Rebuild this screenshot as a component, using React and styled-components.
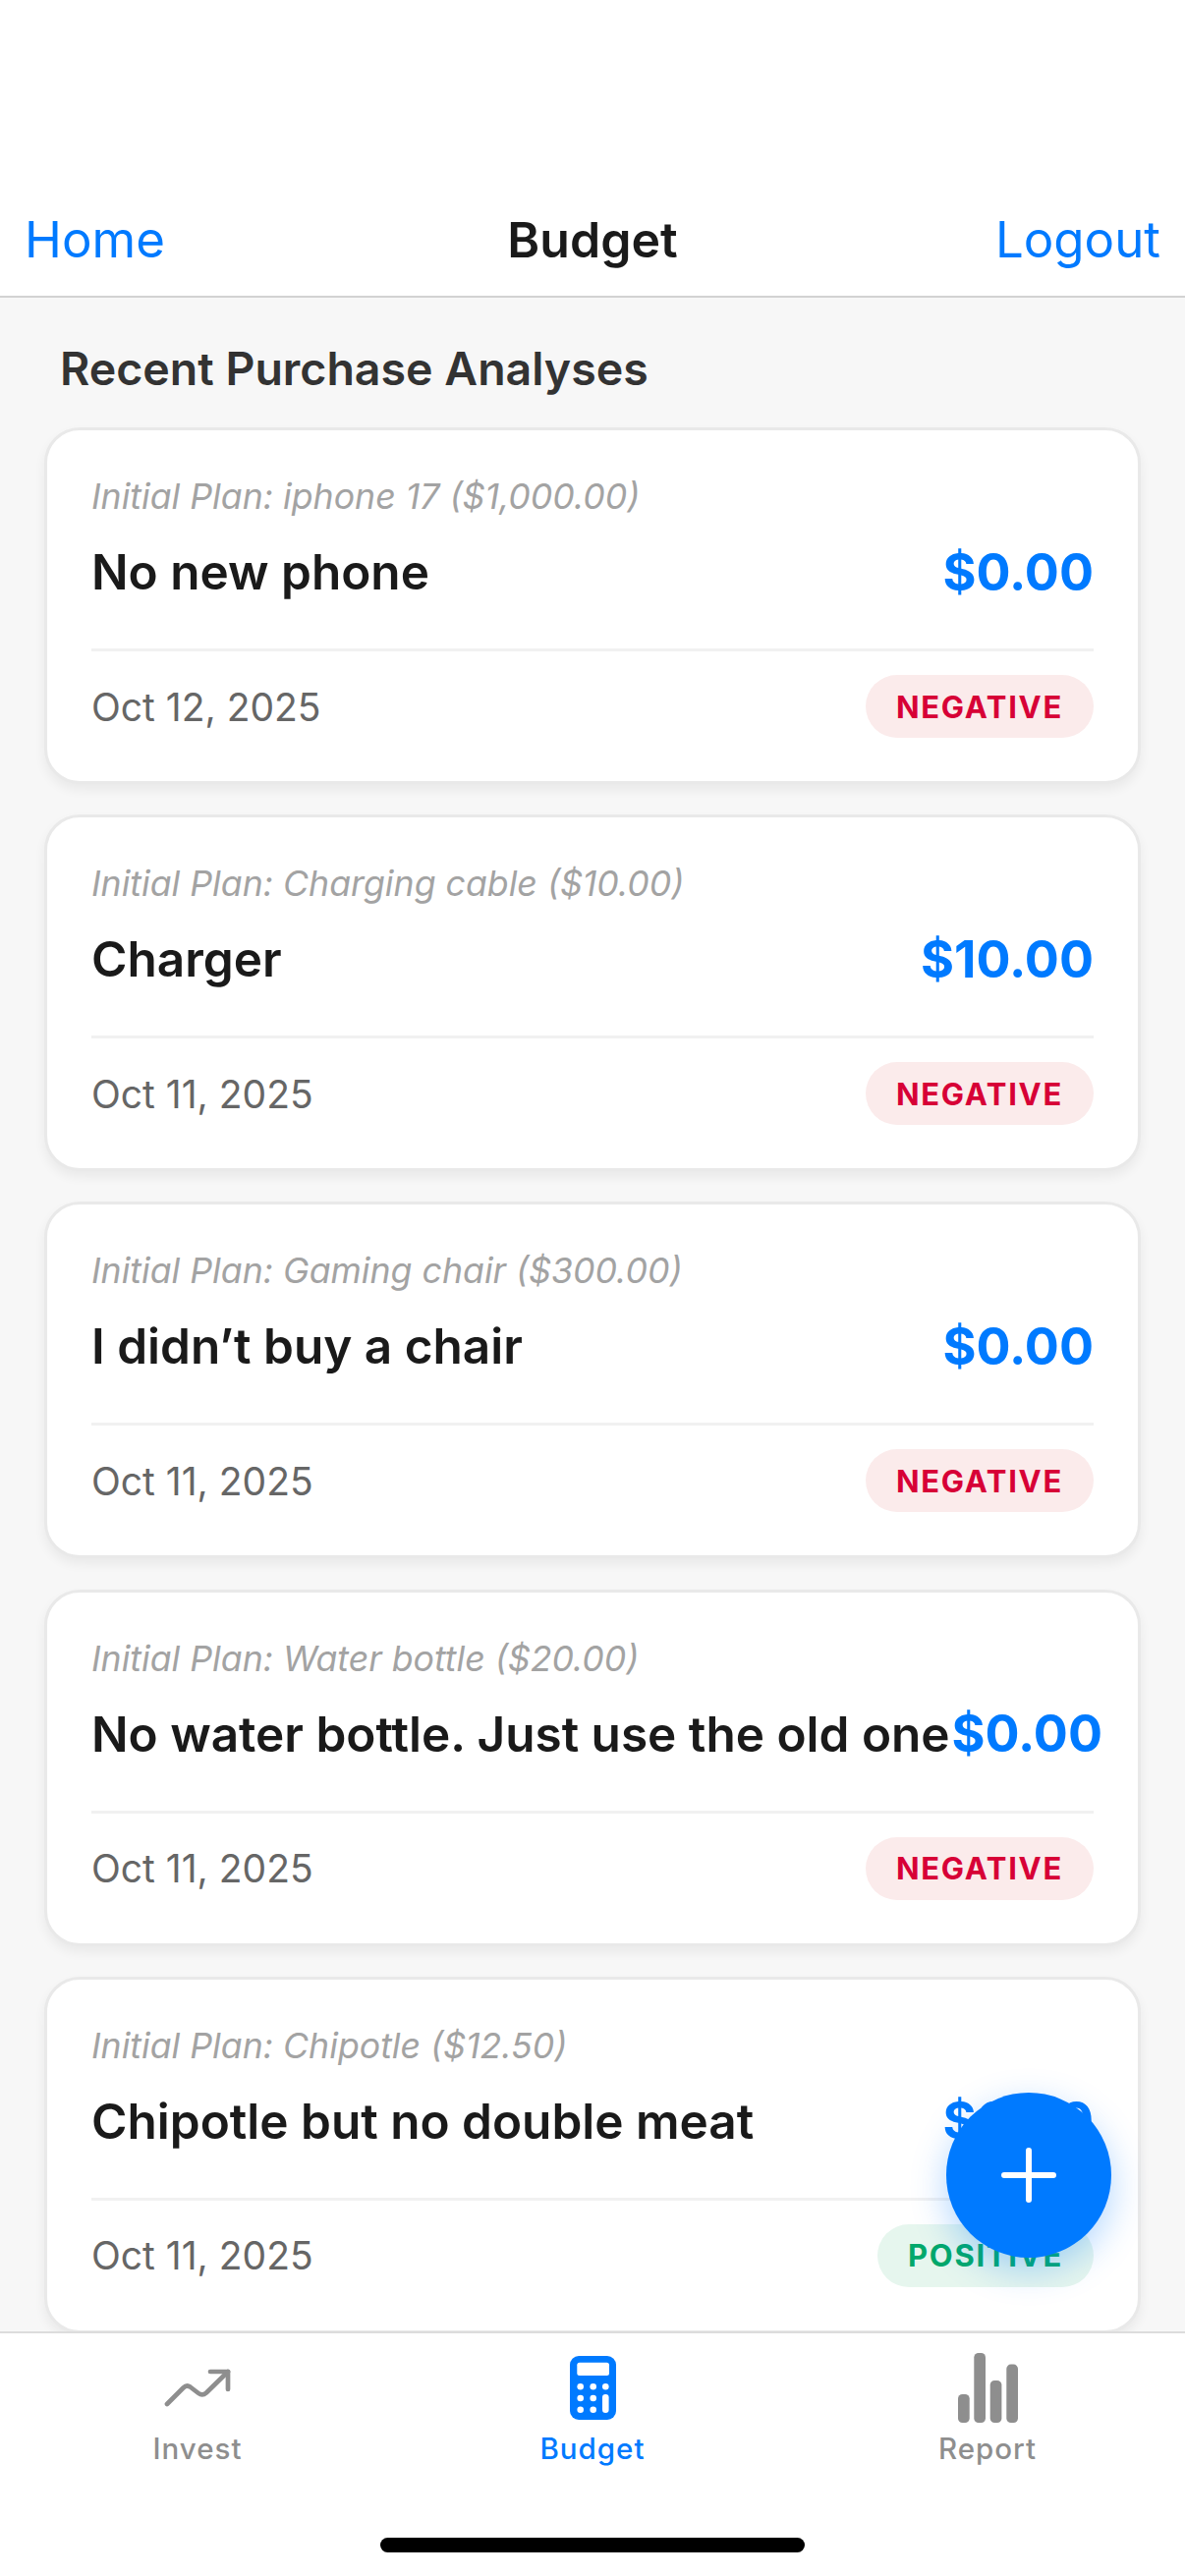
import React from 'react';
import styled, { createGlobalStyle } from 'styled-components';

const FONT = 'Inter, "Noto Sans", sans-serif';

const GlobalStyle = createGlobalStyle`
  html, body {
    margin: 0;
    padding: 0;
    background: #ffffff;
    font-family: ${FONT};
  }
`;

const Screen = styled.div`
  position: relative;
  width: 1206px;
  height: 2622px;
  display: flex;
  flex-direction: column;
  overflow: hidden;
  background: #f7f7f7;
`;

const Header = styled.header`
  flex: none;
  height: 303px;
  box-sizing: border-box;
  padding: 0 25px 27px;
  display: grid;
  grid-template-columns: 1fr auto 1fr;
  align-items: end;
  background: #ffffff;
  border-bottom: 2px solid #d2d2d2;
`;

const NavLink = styled.span`
  font-size: 51px;
  line-height: 60px;
  color: #007aff;
  text-align: ${p => (p.$right ? 'right' : 'left')};
`;

const NavTitle = styled.span`
  font-size: 50px;
  line-height: 60px;
  font-weight: 600;
  color: #1a1a1a;
`;

const Scroll = styled.main`
  flex: 1;
  min-height: 0;
  overflow: hidden;
  padding: 44px 45px 0;
`;

const SectionTitle = styled.h2`
  margin: 0 0 32px 16px;
  font-size: 46.5px;
  line-height: 56px;
  font-weight: 600;
  color: #333333;
`;

const Card = styled.article`
  box-sizing: border-box;
  height: 363px;
  margin-bottom: 31.2px;
  padding: 47px 45px 0;
  background: #ffffff;
  border: 3px solid #e9e9e9;
  border-radius: 36px;
  box-shadow: 0 6px 12px rgba(0, 0, 0, 0.06);
`;

const Plan = styled.div`
  font-size: 35.7px;
  line-height: 40px;
  font-style: italic;
  color: #a3a3a3;
`;

const MainRow = styled.div`
  display: flex;
  align-items: center;
  justify-content: space-between;
  height: 74px;
  margin-top: 20px;
  margin-right: ${p => (p.$overflow ? '-9px' : '0')};
`;

const Title = styled.div`
  font-size: 49.5px;
  font-weight: 600;
  color: #1a1a1a;
  white-space: nowrap;
`;

const Amount = styled.div`
  font-size: 52px;
  font-weight: 700;
  color: #007aff;
  white-space: nowrap;
`;

const Footer = styled.div`
  display: flex;
  align-items: center;
  justify-content: space-between;
  margin-top: 41px;
  padding-top: 24px;
  border-top: 3px solid #f1f1f1;
`;

const DateText = styled.span`
  font-size: 39px;
  color: #666666;
`;

const Badge = styled.span`
  box-sizing: border-box;
  height: 64px;
  padding: 0 31px;
  display: flex;
  align-items: center;
  border-radius: 32px;
  font-size: 31px;
  font-weight: 700;
  letter-spacing: 1.7px;
  color: ${p => (p.$positive ? '#00a86b' : '#d70036')};
  background: ${p => (p.$positive ? '#e6f6ee' : '#fbebeb')};
`;

const Fab = styled.button`
  position: absolute;
  right: 75px;
  bottom: 324px;
  width: 168px;
  height: 168px;
  padding: 0;
  display: flex;
  align-items: center;
  justify-content: center;
  border: none;
  border-radius: 50%;
  background: #007aff;
  box-shadow: 0 12px 36px rgba(0, 122, 255, 0.3);
`;

const TabBar = styled.nav`
  flex: none;
  height: 249px;
  box-sizing: border-box;
  padding-top: 17px;
  position: relative;
  display: grid;
  grid-template-columns: repeat(3, 1fr);
  align-items: start;
  background: #ffffff;
  border-top: 2px solid #dcdcdc;
`;

const Tab = styled.div`
  display: flex;
  flex-direction: column;
  align-items: center;
  color: ${p => (p.$active ? '#007aff' : '#8e8e8e')};
`;

const TabIcon = styled.div`
  height: 76px;
  display: flex;
  align-items: center;
  justify-content: center;
`;

const TabLabel = styled.span`
  margin-top: 6px;
  font-size: 29.5px;
  line-height: 36px;
  font-weight: 500;
  letter-spacing: 1px;
`;

const HomeIndicator = styled.div`
  position: absolute;
  left: 387px;
  bottom: 24px;
  width: 432px;
  height: 15px;
  border-radius: 8px;
  background: #000000;
`;

const items = [
  { plan: 'iphone 17 ($1,000.00)', title: 'No new phone', amount: '$0.00', date: 'Oct 12, 2025' },
  { plan: 'Charging cable ($10.00)', title: 'Charger', amount: '$10.00', date: 'Oct 11, 2025' },
  { plan: 'Gaming chair ($300.00)', title: 'I didn’t buy a chair', amount: '$0.00', date: 'Oct 11, 2025' },
  { plan: 'Water bottle ($20.00)', title: 'No water bottle. Just use the old one', amount: '$0.00', date: 'Oct 11, 2025', overflow: true },
  { plan: 'Chipotle ($12.50)', title: 'Chipotle but no double meat', amount: '$0.00', date: 'Oct 11, 2025', positive: true },
];

function InvestIcon() {
  return (
    <svg width="68" height="39" viewBox="0 0 68 39" fill="none" stroke="currentColor" strokeWidth="4.7" strokeLinecap="round" strokeLinejoin="round">
      <path d="M3 36 L19.5 19.5 Q23 16 26.5 18.5 L35 25 Q39 28 43 24.5 L65 3" />
      <path d="M47 3 H65 V21" />
    </svg>
  );
}

function CalculatorIcon() {
  return (
    <svg width="47" height="65" viewBox="0 0 47 65">
      <rect width="47" height="65" rx="9" fill="currentColor" />
      <rect x="7.3" y="6.7" width="32.7" height="13.3" rx="2.5" fill="#fff" />
      {[31.3, 43, 54.7].map(cy =>
        [10.7, 23.7].map(cx => <circle key={`${cx}-${cy}`} cx={cx} cy={cy} r="3.3" fill="#fff" />)
      )}
      <circle cx="36.3" cy="31.3" r="3.3" fill="#fff" />
      <rect x="33" y="39" width="6.6" height="19" rx="3.3" fill="#fff" />
    </svg>
  );
}

function BarsIcon() {
  return (
    <svg width="61" height="71" viewBox="0 0 61 71" fill="currentColor">
      <rect x="0" y="42" width="11.7" height="29" rx="4.5" />
      <rect x="16.3" y="0" width="11.7" height="71" rx="4.5" />
      <rect x="32.7" y="28" width="11.7" height="43" rx="4.5" />
      <rect x="49.3" y="11.6" width="11.7" height="59.4" rx="4.5" />
    </svg>
  );
}

export default function App() {
  return (
    <>
      <GlobalStyle />
      <Screen>
        <Header>
          <NavLink>Home</NavLink>
          <NavTitle>Budget</NavTitle>
          <NavLink $right>Logout</NavLink>
        </Header>
        <Scroll>
          <SectionTitle>Recent Purchase Analyses</SectionTitle>
          {items.map(item => (
            <Card key={item.title}>
              <Plan>Initial Plan: {item.plan}</Plan>
              <MainRow $overflow={item.overflow}>
                <Title>{item.title}</Title>
                <Amount>{item.amount}</Amount>
              </MainRow>
              <Footer>
                <DateText>{item.date}</DateText>
                <Badge $positive={item.positive}>{item.positive ? 'POSITIVE' : 'NEGATIVE'}</Badge>
              </Footer>
            </Card>
          ))}
        </Scroll>
        <TabBar>
          <Tab>
            <TabIcon><InvestIcon /></TabIcon>
            <TabLabel>Invest</TabLabel>
          </Tab>
          <Tab $active>
            <TabIcon><CalculatorIcon /></TabIcon>
            <TabLabel>Budget</TabLabel>
          </Tab>
          <Tab>
            <TabIcon><BarsIcon /></TabIcon>
            <TabLabel>Report</TabLabel>
          </Tab>
          <HomeIndicator />
        </TabBar>
        <Fab aria-label="Add">
          <svg width="56" height="56" viewBox="0 0 56 56" stroke="#fff" strokeWidth="6" strokeLinecap="round">
            <path d="M28 3 V53 M3 28 H53" />
          </svg>
        </Fab>
      </Screen>
    </>
  );
}
